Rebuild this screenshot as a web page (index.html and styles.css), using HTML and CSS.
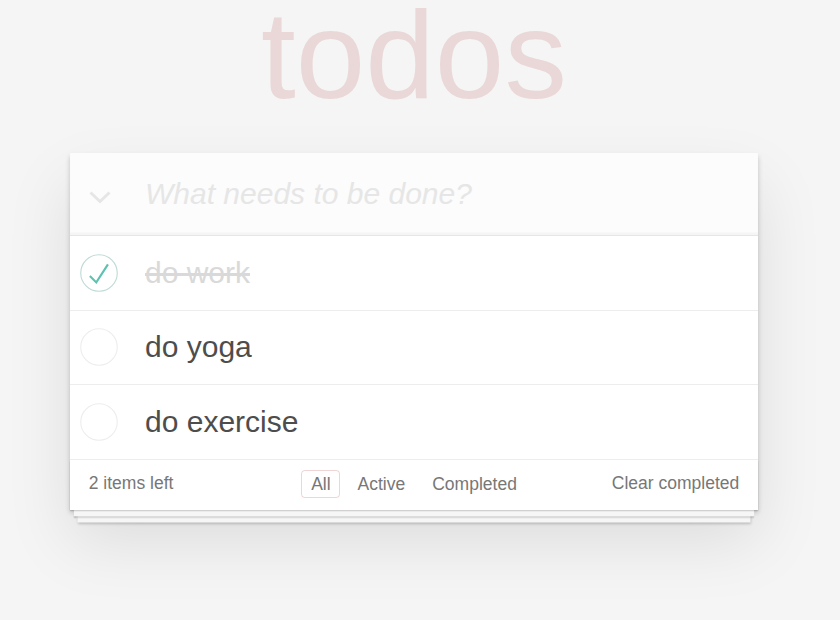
FILE: index.html
```html
<!DOCTYPE html>
<html lang="en">
<head>
<meta charset="utf-8">
<title>todos</title>
<link rel="stylesheet" href="styles.css">
</head>
<body>
<div class="page">
  <h1 class="title">todos</h1>
  <section class="todoapp">
    <header class="new-row">
      <label class="toggle-all">
        <svg width="22" height="13" viewBox="0 0 22 13"><polyline points="1.5,1.5 11,10.5 20.5,1.5" fill="none" stroke="#e6e6e6" stroke-width="3"/></svg>
      </label>
      <input class="new-todo" type="text" placeholder="What needs to be done?">
    </header>
    <ul class="todo-list">
      <li class="item completed">
        <span class="toggle">
          <svg width="38" height="38" viewBox="-2 -2 104 104"><circle cx="50" cy="50" r="50" fill="none" stroke="#bddad5" stroke-width="3"/><path fill="#5dc2af" d="M72 25L42 71 27 56l-4 4 20 20 34-52z"/></svg>
        </span>
        <label class="text">do work</label>
      </li>
      <li class="item">
        <span class="toggle">
          <svg width="38" height="38" viewBox="-2 -2 104 104"><circle cx="50" cy="50" r="50" fill="none" stroke="#ededed" stroke-width="3"/></svg>
        </span>
        <label class="text">do yoga</label>
      </li>
      <li class="item">
        <span class="toggle">
          <svg width="38" height="38" viewBox="-2 -2 104 104"><circle cx="50" cy="50" r="50" fill="none" stroke="#ededed" stroke-width="3"/></svg>
        </span>
        <label class="text">do exercise</label>
      </li>
    </ul>
    <footer class="footer">
      <span class="count">2 items left</span>
      <ul class="filters">
        <li><a class="selected">All</a></li>
        <li><a>Active</a></li>
        <li><a>Completed</a></li>
      </ul>
      <button class="clear">Clear completed</button>
    </footer>
  </section>
</div>
</body>
</html>
```

FILE: styles.css
```css
* { box-sizing: border-box; }

html, body { margin: 0; padding: 0; }

html { background: #f5f5f5; }

body {
  min-height: 620px;
  background: #f5f5f5;
  color: #4d4d4d;
  font-family: "Liberation Sans", Arial, sans-serif;
  font-size: 17.5px;
  line-height: 1.4em;
  -webkit-font-smoothing: antialiased;
}

.page {
  width: 688px;
  margin-left: 70px;
  padding-bottom: 50px;
}

.title {
  margin: 0 0 43px 0;
  font-size: 125px;
  line-height: 110px;
  font-weight: 400;
  text-align: center;
  color: rgba(175, 47, 47, 0.15);
}

.todoapp {
  position: relative;
  z-index: 1;
  background: #fff;
  box-shadow: 0 2.5px 5px rgba(0, 0, 0, 0.2), 0 31.25px 62.5px rgba(0, 0, 0, 0.1);
}

.new-row {
  display: flex;
  align-items: center;
  background: #fcfcfc;
  box-shadow: inset 0 -2.5px 1.25px rgba(0, 0, 0, 0.03);
  border-bottom: 1px solid #e6e6e6;
}

.toggle-all {
  width: 75px;
  flex: none;
  display: flex;
  padding: 6px 0 0 19px;
}

.toggle-all svg { display: block; }

.new-todo {
  flex: 1;
  min-width: 0;
  border: none;
  outline: none;
  background: transparent;
  font-family: inherit;
  font-size: 30px;
  line-height: 42px;
  height: 82px;
  padding: 20px 20px 20px 0;
  color: #4d4d4d;
}

.new-todo::placeholder {
  font-style: italic;
  color: #e6e6e6;
}

.todo-list {
  margin: 0;
  padding: 0;
  list-style: none;
}

.item {
  display: flex;
  align-items: center;
  border-bottom: 1px solid #ededed;
}

.toggle {
  width: 75px;
  flex: none;
  display: flex;
  padding-left: 10px;
}

.toggle svg { display: block; }

.text {
  font-size: 30px;
  line-height: 1.2;
  padding: 18.75px 18.75px 18.75px 0;
  color: #4d4d4d;
}

.completed .text {
  color: #d9d9d9;
  text-decoration: line-through;
}

.footer {
  position: relative;
  display: grid;
  grid-template-columns: 1fr auto 1fr;
  align-items: center;
  height: 50px;
  padding: 0 18.75px 2px;
  color: #777;
  font-size: 17.5px;
  line-height: 25px;
}

.footer::before {
  content: "";
  position: absolute;
  left: 0;
  right: 0;
  top: 0;
  bottom: 0;
  z-index: -1;
  box-shadow: 0 1.25px 1.25px rgba(0, 0, 0, 0.2),
              0 10px 0 -3.75px #f6f6f6,
              0 11.25px 1.25px -3.75px rgba(0, 0, 0, 0.2),
              0 20px 0 -7.5px #f6f6f6,
              0 21.25px 2.5px -7.5px rgba(0, 0, 0, 0.2);
}

.count { justify-self: start; }

.filters {
  display: flex;
  margin: 0;
  padding: 0;
  list-style: none;
}

.filters a {
  display: block;
  margin: 3.75px;
  padding: 1px 8.75px;
  border: 1px solid transparent;
  border-radius: 3.75px;
  line-height: 24px;
  color: inherit;
}

.filters a.selected {
  border-color: rgba(175, 47, 47, 0.2);
}

.clear {
  justify-self: end;
  border: none;
  background: none;
  padding: 0;
  margin: 0;
  font-family: inherit;
  font-size: 17.5px;
  line-height: 25px;
  color: #777;
}
```
